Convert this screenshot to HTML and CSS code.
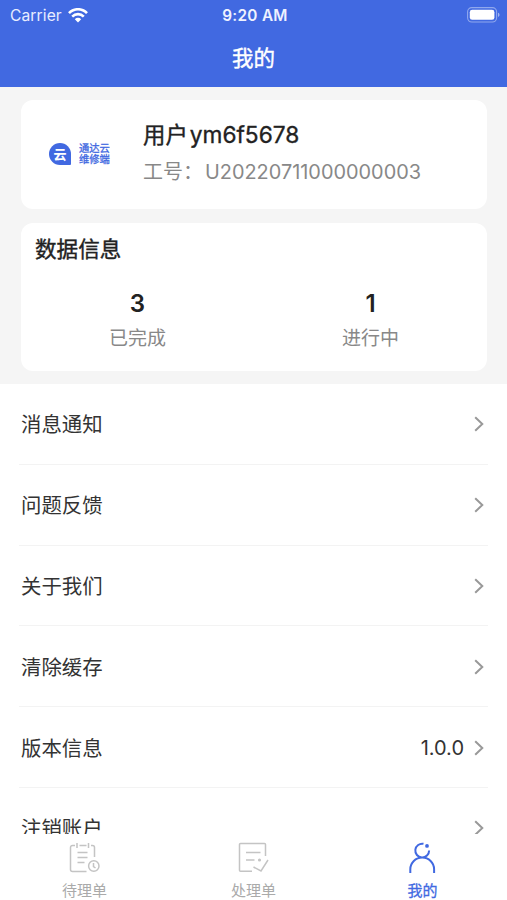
FILE: index.html
```html
<!DOCTYPE html>
<html lang="zh-CN">
<head>
<meta charset="utf-8">
<title>我的</title>
<link rel="stylesheet" href="styles.css">
</head>
<body>
<div class="app">
  <header class="header">
    <div class="status">
      <div class="carrier">Carrier
        <svg class="wifi" width="20" height="15" viewBox="0 0 20 15" fill="none" stroke="#fff" stroke-width="2.6"><path d="M1 5.2C6-.1 14-.1 19 5.2M4.2 8.600c3.300-3.300 8.300-3.300 11.600 0"/><path d="M6.800 11.200c1.800-1.800 4.600-1.800 6.400 0L10 14.500z" fill="#fff" stroke="none"/></svg>
      </div>
      <div class="time">9:20 AM</div>
      <svg class="battery" width="33" height="16" viewBox="0 0 33 16"><rect x=".6" y=".6" width="29" height="14.400" rx="4.200" fill="none" stroke="#fff" stroke-opacity=".42" stroke-width="1.100"/><rect x="2.800" y="2.800" width="24.600" height="10" rx="2.400" fill="#fff"/><path d="M31 5.800c2 .7 2 3.500 0 4.200z" fill="#fff" fill-opacity=".5"/></svg>
    </div>
    <h1 class="title">我的</h1>
  </header>
  <main class="content">
    <section class="summary">
      <div class="card profile">
        <div class="logo">
          <span class="mark">云</span>
          <span class="brand"><span>通达云</span><span>维修端</span></span>
        </div>
        <div class="user">
          <div class="name">用户<span class="handle">ym6f5678</span></div>
          <div class="number">工号：<span class="digits">U20220711000000003</span></div>
        </div>
      </div>
      <div class="card data">
        <h2 class="heading">数据信息</h2>
        <div class="stats">
          <div class="stat"><div class="value">3</div><div class="label">已完成</div></div>
          <div class="stat"><div class="value">1</div><div class="label">进行中</div></div>
        </div>
      </div>
    </section>
    <ul class="menu">
      <li class="row"><span>消息通知</span><svg class="chevron" viewBox="0 0 10 16"><path d="M1.200 1.200 8.300 8l-7.100 6.800"/></svg></li>
      <li class="row"><span>问题反馈</span><svg class="chevron" viewBox="0 0 10 16"><path d="M1.200 1.200 8.300 8l-7.100 6.800"/></svg></li>
      <li class="row"><span>关于我们</span><svg class="chevron" viewBox="0 0 10 16"><path d="M1.200 1.200 8.300 8l-7.100 6.800"/></svg></li>
      <li class="row"><span>清除缓存</span><svg class="chevron" viewBox="0 0 10 16"><path d="M1.200 1.200 8.300 8l-7.100 6.800"/></svg></li>
      <li class="row"><span>版本信息</span><span class="version">1.0.0</span><svg class="chevron" viewBox="0 0 10 16"><path d="M1.200 1.200 8.300 8l-7.100 6.800"/></svg></li>
      <li class="row"><span>注销账户</span><svg class="chevron" viewBox="0 0 10 16"><path d="M1.200 1.200 8.300 8l-7.100 6.800"/></svg></li>
    </ul>
  </main>
  <nav class="tabs">
    <a class="tab">
      <svg width="32" height="32" viewBox="0 0 32 32"><path d="M6 3.500H3.500a2 2 0 0 0-2 2v22a2 2 0 0 0 2 2h14M25.500 15V5.500a2 2 0 0 0-2-2H22M10.500 3.500h7M8 1v5M19.500 1v5M8.500 10.500h10M8.500 15.500h10M8.500 20.500h7"/><circle cx="24.800" cy="24" r="5.200"/><path d="M24.500 21v3.500l2 1.500"/></svg>
      <span>待理单</span>
    </a>
    <a class="tab">
      <svg width="32" height="32" viewBox="0 0 32 32"><path d="M14 29.200H2.500a1 1 0 0 1-1-1V2.500a1 1 0 0 1 1-1h24a1 1 0 0 1 1 1V14M8 10.500h14.500M8 18h8.500M15.500 25l7.500 4 7-11"/><circle cx="21.500" cy="18" r=".8"/></svg>
      <span>处理单</span>
    </a>
    <a class="tab active">
      <svg width="32" height="32" viewBox="0 0 32 32"><path d="M16.500 1.800A6.900 6.900 0 1 0 22.100 8.500M3.300 31V27.300a11.900 11.700 0 0 1 23.800 0V31"/><circle class="dot" cx="20" cy="3.900" r="1.900"/></svg>
      <span>我的</span>
    </a>
  </nav>
</div>
</body>
</html>
```

FILE: styles.css
```css
* { box-sizing: border-box; }
body {
  margin: 0;
  background: #fff;
  color: #333;
  font-family: Inter, "Noto Sans CJK SC", sans-serif;
}
.app { display: flex; flex-direction: column; height: 900px; overflow: hidden; }
.header { flex: none; height: 87px; background: #4169e1; color: #fff; }
.status {
  display: grid;
  grid-template-columns: 1fr auto 1fr;
  align-items: center;
  height: 30px;
  padding: 0 7px 0 10px;
}
.carrier {
  display: flex;
  align-items: center;
  gap: 6px;
  padding-top: 1px;
  font-size: 15.6px;
  line-height: 30px;
  letter-spacing: 0.1px;
  color: #e8edff;
}
.wifi { margin-top: -2px; }
.time { font-size: 15.3px; font-weight: 600; letter-spacing: 0.3px; color: #eef2ff; }
.battery { justify-self: end; margin-top: -1px; }
.title {
  margin: 0;
  font-size: 21.5px;
  font-weight: 400;
  line-height: 57px;
  text-align: center;
}
.title, .name, .heading { -webkit-text-stroke: 0.4px currentColor; }
.content { flex: 1; min-height: 0; overflow: hidden; }
.summary {
  display: flex;
  flex-direction: column;
  gap: 14px;
  height: 297px;
  padding: 13px 20px 13px 21px;
  background: #f5f5f5;
}
.card { background: #fff; border-radius: 12px; }
.profile { display: flex; align-items: center; height: 109px; padding-left: 28px; }
.logo { display: flex; align-items: center; gap: 8px; width: 94px; margin-top: -2px; color: #4169e1; }
.mark {
  width: 22px;
  height: 22px;
  border-radius: 11px 11px 1px 11px;
  background: #4169e1;
  color: #fff;
  font-size: 13px;
  font-weight: 700;
  line-height: 22px;
  text-align: center;
}
.brand {
  display: flex;
  flex-direction: column;
  font-size: 10.3px;
  line-height: 10.5px;
  white-space: nowrap;
  -webkit-text-stroke: 0.3px currentColor;
}
.user { margin-top: -3px; }
.name { color: #222; font-size: 22.4px; line-height: 32px; white-space: nowrap; }
.handle { margin-left: 2px; font-size: 22.7px; -webkit-text-stroke-width: 0.35px; }
.number { margin-top: 6px; color: #888; font-size: 20px; line-height: 30px; white-space: nowrap; }
.digits { margin-left: 2px; font-size: 19.9px; }
.data { height: 148px; padding-top: 10px; }
.heading { margin: 0 0 0 14px; color: #222; font-size: 21.6px; font-weight: 400; line-height: 32px; }
.stats { display: grid; grid-template-columns: 1fr 1fr; margin-top: 22px; text-align: center; }
.value { color: #222; font-size: 24px; font-weight: 600; line-height: 34px; }
.label { color: #888; font-size: 19px; line-height: 35px; }
.menu { margin: 0; padding: 0 19px; list-style: none; }
.row {
  display: flex;
  align-items: center;
  height: 80.8px;
  padding: 1px 4px 0 2px;
  border-bottom: 1px solid #f3f3f3;
  font-size: 20.4px;
  line-height: 30px;
}
.row > span:first-child { padding-top: 2px; }
.version { margin-left: auto; font-size: 20px; }
.chevron {
  width: 10px;
  height: 16px;
  margin-left: auto;
  fill: none;
  stroke: #999;
  stroke-width: 2;
}
.version + .chevron { margin-left: 10px; }
.tabs { flex: none; display: grid; grid-template-columns: repeat(3, 1fr); height: 66px; background: #fff; }
.tab {
  display: flex;
  flex-direction: column;
  align-items: center;
  padding-top: 8px;
  color: #aaa;
  font-size: 15px;
  line-height: 24px;
}
.tab svg { margin-bottom: 5px; fill: none; stroke: #c4c4c4; stroke-width: 1.5; }
.tab.active { color: #4169e1; -webkit-text-stroke: 0.3px currentColor; }
.tab.active svg { stroke: #4169e1; stroke-width: 2; }
.tab .dot { fill: #4169e1; stroke: none; }
```
